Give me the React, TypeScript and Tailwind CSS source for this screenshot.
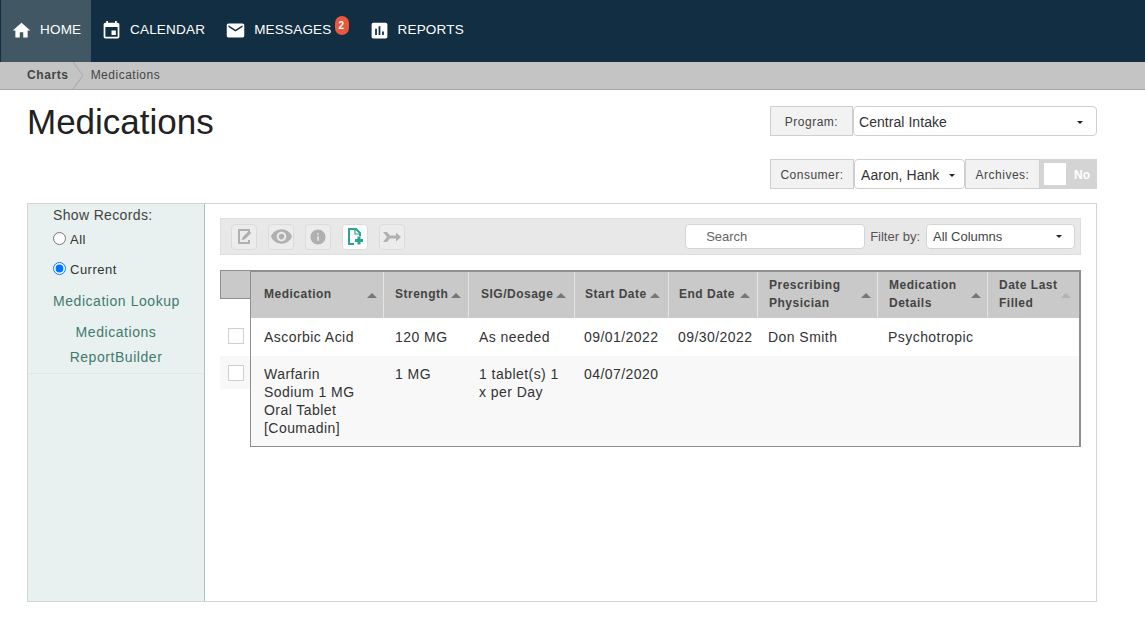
import { MdHome, MdEvent, MdEmail, MdAssessment, MdRemoveRedEye, MdInfo } from 'react-icons/md'

const navItems = [
  { label: 'HOME', icon: MdHome, active: true },
  { label: 'CALENDAR', icon: MdEvent },
  { label: 'MESSAGES', icon: MdEmail, badge: '2' },
  { label: 'REPORTS', icon: MdAssessment },
]

const columns = [
  { label: ['Medication'], width: 'w-[133px]', pad: 'pl-[13px] pr-[6px]' },
  { label: ['Strength'], width: 'w-[85px]', pad: 'pl-[11px] pr-[7px]' },
  { label: ['SIG/Dosage'], width: 'w-[106px]', pad: 'pl-[12px] pr-[8px]' },
  { label: ['Start Date'], width: 'w-[94px]', pad: 'pl-[10px] pr-[8px]' },
  { label: ['End Date'], width: 'w-[89px]', pad: 'pl-[10px] pr-[7px]' },
  { label: ['Prescribing', 'Physician'], width: 'w-[120px]', pad: 'pl-[11px] pr-[6px]' },
  { label: ['Medication', 'Details'], width: 'w-[110px]', pad: 'pl-[11px] pr-[6px]' },
  { label: ['Date Last', 'Filled'], width: 'flex-1', pad: 'pl-[11px] pr-[8px]', muted: true },
]

// left padding of the body cells, they don't line up with the headers exactly
const cellPad = ['pl-[13px]', 'pl-[11px]', 'pl-[10px]', 'pl-[9px]', 'pl-[9px]', 'pl-[10px]', 'pl-[10px]', 'pl-[10px]']

const rows = [
  { cells: [['Ascorbic Acid'], ['120 MG'], ['As needed'], ['09/01/2022'], ['09/30/2022'], ['Don Smith'], ['Psychotropic'], []], height: 'h-[38px] items-center' },
  { cells: [['Warfarin', 'Sodium 1 MG', 'Oral Tablet', '[Coumadin]'], ['1 MG'], ['1 tablet(s) 1', 'x per Day'], ['04/07/2020'], [], [], [], []], height: 'h-[90px] bg-[#f8f8f8] pt-[9px]' },
]

function Caret({ className }: { className?: string }) {
  return <span className={`inline-block shrink-0 w-0 h-0 border-x-[5px] border-x-transparent border-b-[5px] border-t-0 ${className}`} />
}

function ToolButton({ children, active }: { children: React.ReactNode; active?: boolean }) {
  return (
    <button className={`w-[26px] h-[26px] flex items-center justify-center rounded-[4px] border border-[#dcdcdc] ${active ? 'bg-white text-[#26a68d]' : 'bg-[#ececec] text-[#b0b0b0]'}`}>
      {children}
    </button>
  )
}

function Label({ children, className }: { children: React.ReactNode; className?: string }) {
  return (
    <div className={`h-[30px] pt-px flex items-center justify-center bg-[#f2f2f2] border border-[#cfcfcf] text-[12px] text-[#444] tracking-[0.5px] ${className}`}>
      {children}
    </div>
  )
}

export default function App() {
  return (
    <div className="w-[1145px] h-[627px] bg-white overflow-hidden font-['Liberation_Sans',Arial,sans-serif] text-[#333]">
      <nav className="h-[62px] bg-[#112e42] flex pl-px">
        {navItems.map(item => (
          <a key={item.label} className={`h-full flex items-center px-[10px] pb-[2px] text-white text-[13.5px] tracking-[0.2px] ${item.active ? 'bg-[#415764] w-[90px]' : ''}`}>
            <item.icon className="text-[21px] mr-[8px] shrink-0" />
            <span>{item.label}</span>
            {item.badge && (
              <span className="relative -top-[5px] ml-[3px] w-[14px] h-[19px] rounded-[7px] bg-[#e8583f] text-white text-[10px] font-bold flex items-center justify-center">
                {item.badge}
              </span>
            )}
          </a>
        ))}
      </nav>

      <div className="h-[28px] bg-[#c4c4c4] border-b border-[#a8a8a8] flex items-center text-[12px] tracking-[0.5px] text-[#444]">
        <span className="pl-[27px] pb-px font-bold tracking-[0.6px] text-[#444]">Charts</span>
        <svg width="12" height="27" viewBox="0 0 12 27" className="ml-[3px] mr-[7px]">
          <path d="M1 0 L11 13.5 L1 27" fill="none" stroke="#a6a6a6" />
        </svg>
        <span className="pb-px">Medications</span>
      </div>

      <div className="px-[27px] w-[1124px]">
        <div className="flex justify-between h-[113px]">
          <h1 className="text-[35px] leading-[38px] mt-[13px] text-[#222]">Medications</h1>
          <div className="mt-[16px] flex flex-col items-end gap-[23px]">
            <div className="flex">
              <Label className="w-[83px]">Program:</Label>
              <div className="w-[244px] h-[30px] pt-[2px] bg-white border border-[#cfcfcf] rounded-[4px] flex items-center justify-between pl-[5px] pr-[13px] text-[14px] tracking-[0.05px]">
                <span>Central Intake</span>
                <span className="w-0 h-0 border-x-[3px] border-x-transparent border-t-[3px] border-t-[#222]" />
              </div>
            </div>
            <div className="flex">
              <Label className="w-[84px]">Consumer:</Label>
              <div className="w-[111px] h-[30px] pt-[2px] bg-white border border-[#cfcfcf] rounded-[4px] flex items-center justify-between pl-[6px] pr-[9px] text-[14px] tracking-[0.05px]">
                <span>Aaron, Hank</span>
                <span className="w-0 h-0 border-x-[3px] border-x-transparent border-t-[3px] border-t-[#222]" />
              </div>
              <Label className="w-[75px]">Archives:</Label>
              <div className="w-[57px] h-[30px] bg-[#d4d4d4] flex items-center pl-[4px]">
                <span className="w-[22px] h-[22px] bg-white" />
                <span className="ml-[8px] mt-px text-[12px] font-bold text-white">No</span>
              </div>
            </div>
          </div>
        </div>

        <div className="h-[399px] border border-[#d0d6d5] flex">
          <aside className="w-[177px] shrink-0 bg-[#e8f1ef] border-r border-[#a9c4bc] text-[14px] tracking-[0.55px]">
            <div className="pl-[25px] pt-[2px] leading-[18px] tracking-[0.35px] text-[#444]">Show Records:</div>
            <label className="pl-[25px] mt-[5px] h-[18px] flex items-center gap-[4px] text-[13px] tracking-[0.5px]">
              <input type="radio" name="records" className="w-[13px] h-[13px] m-0" />
              <span className="pt-[4px]">All</span>
            </label>
            <label className="pl-[25px] mt-[12px] h-[18px] flex items-center gap-[4px] text-[13px] tracking-[0.5px]">
              <input type="radio" name="records" defaultChecked className="w-[13px] h-[13px] m-0" />
              <span className="pt-[4px]">Current</span>
            </label>
            <div className="pl-[25px] mt-[15px] leading-[18px] text-[#437a6e]">Medication Lookup</div>
            <div className="mt-[9px] pb-[3px] border-b border-[#dfeae7] text-center text-[#437a6e]">
              <div className="leading-[25px] pt-[1px]">Medications</div>
              <div className="leading-[25px]">ReportBuilder</div>
            </div>
          </aside>

          <main className="flex-1 pl-[15px] pr-[15px] pt-[14px]">
            <div className="h-[37px] bg-[#e8e8e8] border border-[#dedede] flex items-center pl-[10px] pr-[5px]">
              <div className="flex gap-[11px]">
                <ToolButton>
                  <svg width="17" height="17" viewBox="0 0 17 17" fill="none" stroke="currentColor">
                    <path d="M13 6V2H3v13h10v-3" strokeWidth="2" />
                    <path d="M6 12l1-3 6-6 2 2-6 6z" fill="currentColor" strokeWidth="0.5" />
                  </svg>
                </ToolButton>
                <ToolButton><MdRemoveRedEye className="text-[23px] shrink-0" /></ToolButton>
                <ToolButton><MdInfo className="text-[18px]" /></ToolButton>
                <ToolButton active>
                  <svg width="20" height="20" viewBox="0 0 20 20" fill="none" stroke="currentColor">
                    <path d="M9 17H4V2h7l4 4v3" strokeWidth="2" />
                    <path d="M10 2v5h5" strokeWidth="1.2" />
                    <path d="M14 9.500v8M10 13.500h8" strokeWidth="3" />
                  </svg>
                </ToolButton>
                <ToolButton>
                  <svg width="20" height="14" viewBox="0 0 20 14" fill="currentColor">
                    <path d="M1 2h4l4 5-4 5H1l4-5z" />
                    <path d="M8 5.500h6V2.500l5 4.500-5 4.500V8.500H8z" />
                  </svg>
                </ToolButton>
              </div>
              <div className="ml-auto flex items-center text-[13px]">
                <div className="w-[180px] h-[25px] bg-white border border-[#d4d4d4] rounded-[4px] flex items-center pl-[20px] text-[#666]">Search</div>
                <span className="ml-[5px] text-[#555]">Filter by:</span>
                <div className="ml-[6px] w-[149px] h-[25px] bg-white border border-[#d4d4d4] rounded-[4px] flex items-center justify-between pl-[6px] pr-[12px] text-[#444]">
                  <span>All Columns</span>
                  <span className="w-0 h-0 border-x-[3px] border-x-transparent border-t-[3px] border-t-[#222]" />
                </div>
              </div>
            </div>

            <div className="mt-[15px] flex items-start">
              <div className="w-[30px] shrink-0">
                <div className="h-[29px] bg-[#c9c9c9] border-t border-l border-b border-[#8f8f8f]" />
                <div className="h-[19px]" />
                <div className="h-[38px] flex items-center pl-[8px] pb-[2px]">
                  <span className="w-[16px] h-[16px] bg-white border border-[#cfcfcf]" />
                </div>
                <div className="h-[33px] bg-[#f8f8f8] pl-[8px] pt-[9px]">
                  <span className="block w-[16px] h-[16px] bg-white border border-[#cfcfcf]" />
                </div>
              </div>

              <div className="w-[831px] border border-[#8f8f8f] border-r-2 border-t-2">
                <div className="flex h-[46px] bg-[#c9c9c9]">
                  {columns.map(col => (
                    <div key={col.label[0]} className={`${col.width} ${col.pad} border-r border-[#e4e4e4] last:border-r-0 flex items-center justify-between text-[12px] font-bold leading-[18px] tracking-[0.5px] text-[#444]`}>
                      <div className="-translate-y-[1px]">{col.label.map(line => <div key={line}>{line}</div>)}</div>
                      <Caret className={col.muted ? 'border-b-[#b4b4b4]' : 'border-b-[#777]'} />
                    </div>
                  ))}
                </div>
                {rows.map(row => (
                  <div key={row.cells[0][0]} className={`flex text-[14px] leading-[18px] tracking-[0.45px] ${row.height}`}>
                    {row.cells.map((cell, i) => (
                      <div key={i} className={`${columns[i].width} ${cellPad[i]}`}>
                        {cell.map(line => <div key={line}>{line}</div>)}
                      </div>
                    ))}
                  </div>
                ))}
              </div>
            </div>
          </main>
        </div>
      </div>
    </div>
  )
}
